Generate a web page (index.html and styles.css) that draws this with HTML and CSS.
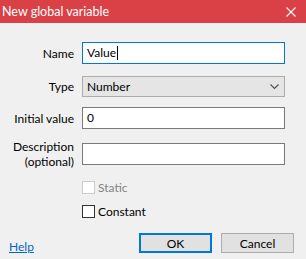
FILE: index.html
```html
<!DOCTYPE html>
<html lang="en">
<head>
    <meta charset="UTF-8">
    <title>New global variable</title>
    <link rel="stylesheet" href="styles.css">
</head>
<body>
    <div class="dialog">
        <div class="titlebar">
            <span class="title">New global variable</span>
            <svg class="close" width="10" height="10" viewBox="0 0 10 10">
                <path d="M0.5 0.5 L9.5 9.5 M9.5 0.5 L0.5 9.5" stroke="#fff" stroke-width="1.1"/>
            </svg>
        </div>

        <div class="form">
            <div class="row row-name">
                <label class="label">Name</label>
                <div class="field focused">Value<span class="caret"></span></div>
            </div>
            <div class="row row-type">
                <label class="label">Type</label>
                <div class="select">
                    <span>Number</span>
                    <svg width="9" height="6" viewBox="0 0 9 6">
                        <path d="M0.5 0.5 L4.5 4.5 L8.5 0.5" fill="none" stroke="#505050" stroke-width="1.2"/>
                    </svg>
                </div>
            </div>
            <div class="row row-initial">
                <label class="label">Initial value</label>
                <div class="field">0</div>
            </div>
            <div class="row row-desc">
                <label class="label">Description<br>(optional)</label>
                <div class="field"></div>
            </div>
            <div class="row row-static">
                <span></span>
                <div class="check disabled"><span class="box"></span>Static</div>
            </div>
            <div class="row row-const">
                <span></span>
                <div class="check"><span class="box"></span>Constant</div>
            </div>
        </div>

        <div class="footer">
            <a class="help" href="#">Help</a>
            <div class="buttons">
                <button class="button default">OK</button>
                <button class="button">Cancel</button>
            </div>
        </div>
    </div>
</body>
</html>
```

FILE: styles.css
```css
* {
    margin: 0;
    padding: 0;
    box-sizing: border-box;
}

body {
    background-color: #f0f0f0;
    font-family: 'Lato', 'Liberation Sans', sans-serif;
    font-size: 12px;
    color: #000;
    width: 306px;
    height: 259px;
    overflow: hidden;
}

.dialog {
    width: 306px;
    height: 259px;
    display: flex;
    flex-direction: column;
}

.titlebar {
    height: 23px;
    flex-shrink: 0;
    background-color: #d94147;
    color: #fff;
    display: flex;
    align-items: center;
    justify-content: space-between;
    padding: 0 10px 0 2px;
}

.title {
    font-size: 12.5px;
    line-height: 23px;
}

.form {
    padding-top: 19px;
    display: flex;
    flex-direction: column;
}

.row {
    display: grid;
    grid-template-columns: 74px 203px;
    grid-template-rows: 100%;
    column-gap: 8px;
    align-items: center;
}

.label {
    text-align: right;
    line-height: 15px;
    color: #000;
}

.row-name { height: 22px; }
.row-type { height: 21px; margin-top: 12px; }
.row-initial { height: 22px; margin-top: 10px; }
.row-desc { height: 22px; margin-top: 14px; }
.row-static { height: 13px; margin-top: 16px; }
.row-const { height: 13px; margin-top: 11px; }

.field {
    height: 22px;
    background: #fff;
    border: 1px solid #7a7a7a;
    padding: 0 4px;
    line-height: 20px;
    display: flex;
    align-items: center;
}

.field.focused {
    border-color: #0078d7;
}

.caret {
    display: inline-block;
    width: 1px;
    height: 14px;
    background: #000;
    margin-left: 1px;
}

.select {
    height: 21px;
    background: #e5e5e5;
    border: 1px solid #adadad;
    display: flex;
    align-items: center;
    justify-content: space-between;
    padding: 0 5px 0 4px;
}

.check {
    display: flex;
    align-items: center;
    gap: 3px;
    height: 13px;
    line-height: 13px;
}

.box {
    width: 13px;
    height: 13px;
    background: #fff;
    border: 1px solid #333;
}

.check.disabled {
    color: #838383;
}

.check.disabled .box {
    border-color: #cccccc;
}

.footer {
    margin-top: 15px;
    height: 20px;
    display: flex;
    justify-content: space-between;
    align-items: center;
    padding: 0 12px 0 9px;
}

.help {
    color: #0066cc;
    text-decoration: underline;
    margin-top: 6px;
}

.buttons {
    display: flex;
    gap: 9px;
}

.button {
    width: 73px;
    height: 20px;
    background: #e1e1e1;
    border: 1px solid #adadad;
    font-family: inherit;
    font-size: 12px;
    color: #000;
}

.button.default {
    border: 2px solid #0078d7;
}
```
